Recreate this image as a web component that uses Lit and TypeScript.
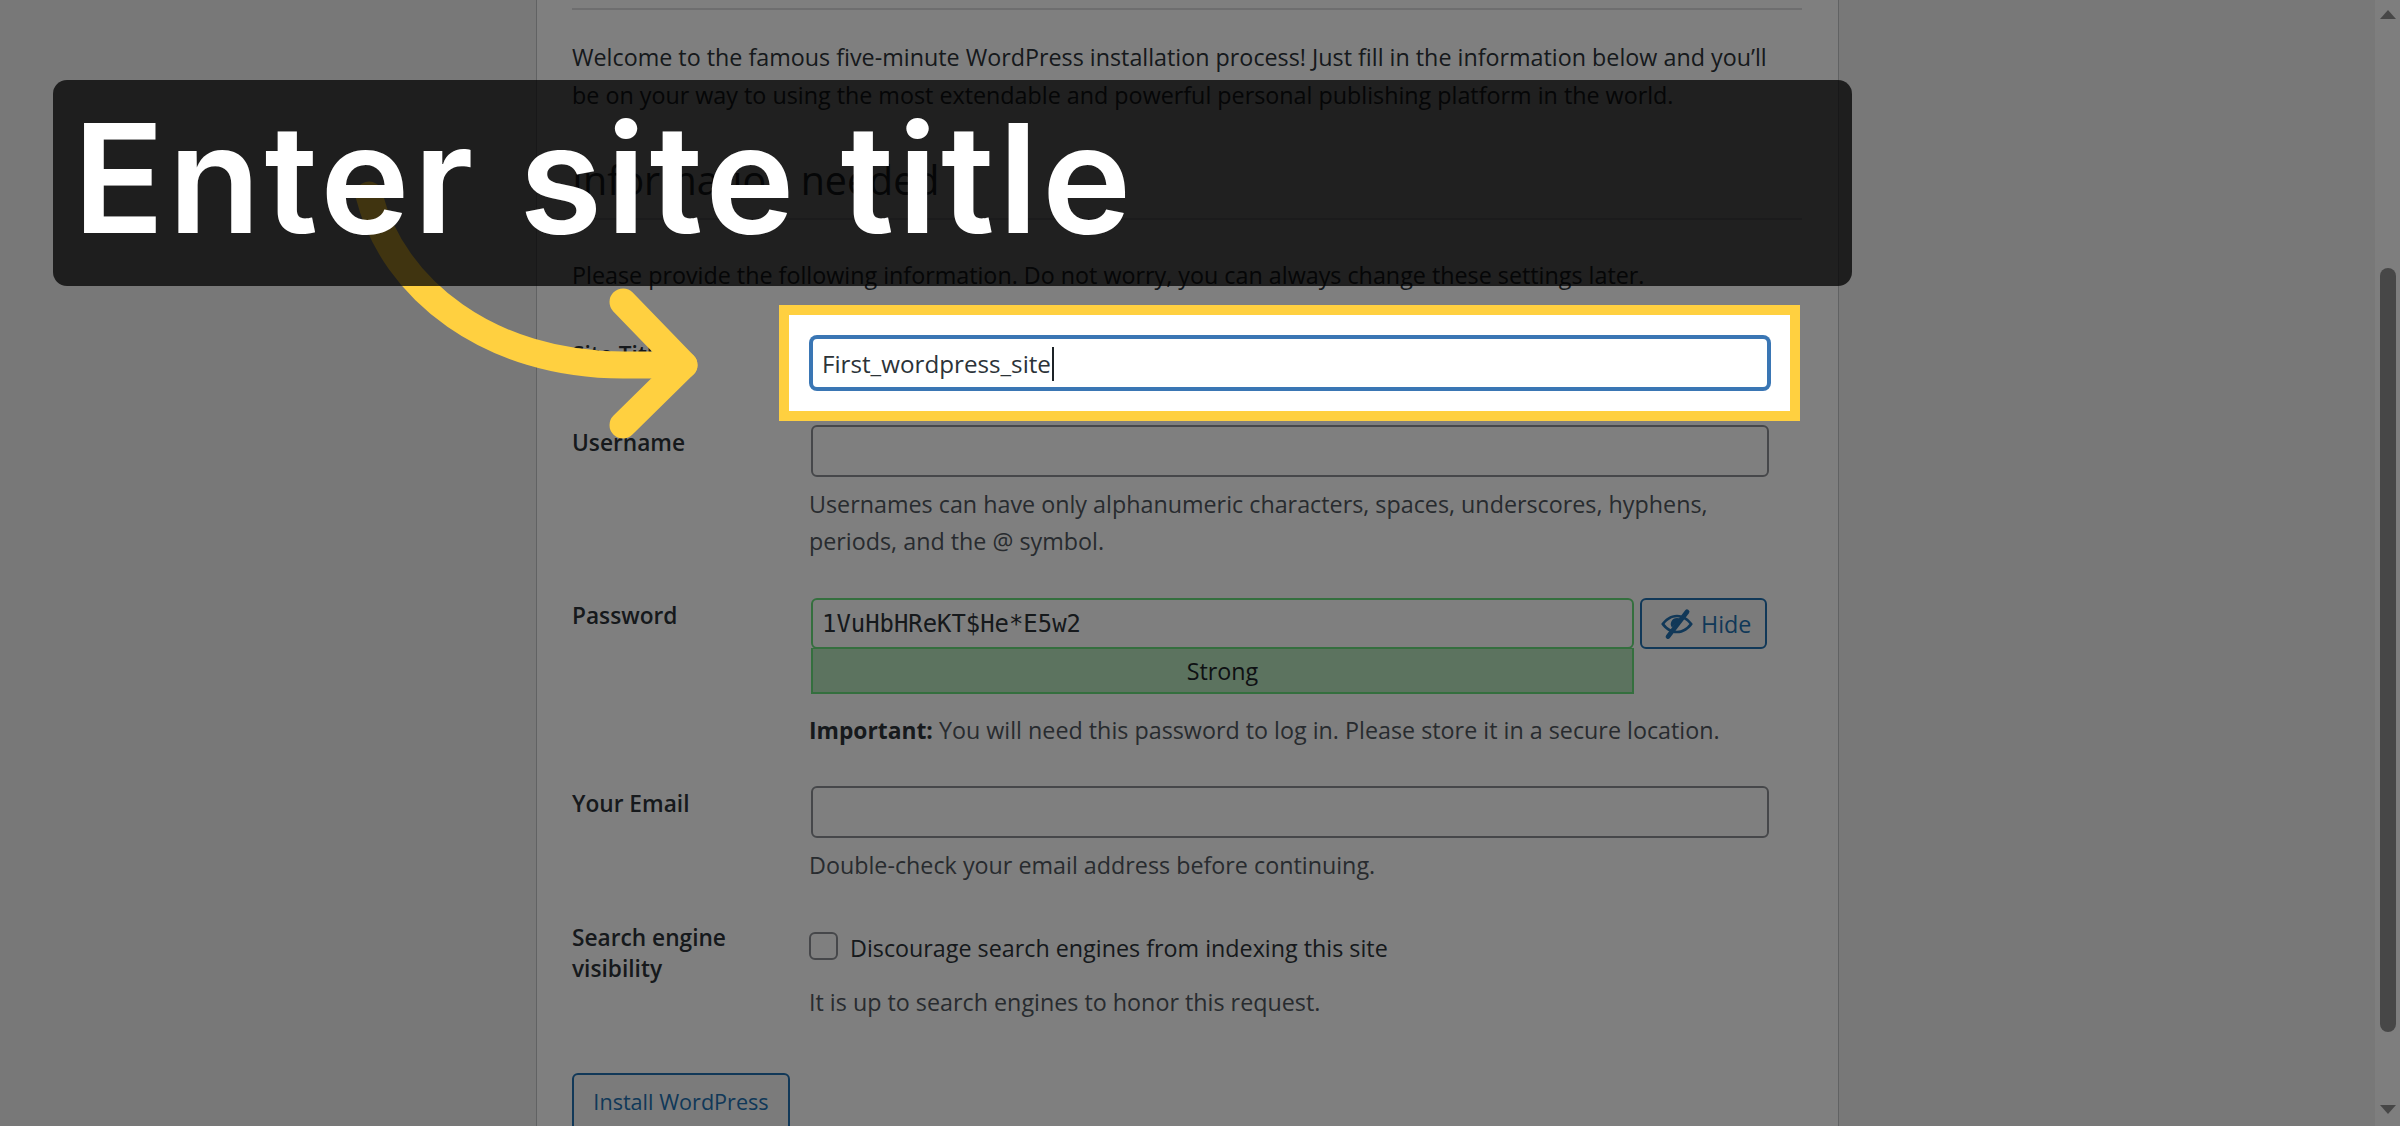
import { LitElement, html, css } from "lit";
import { customElement } from "lit/decorators.js";

@customElement("app-root")
export class AppRoot extends LitElement {
  static styles = css`
    :host {
      display: block;
    }
    .screen {
      position: relative;
      display: flex;
      width: 2400px;
      height: 1126px;
      overflow: hidden;
      background: #f0f0f1;
      font-family: "Open Sans", "Noto Sans", sans-serif;
      font-size: 23.3px;
      line-height: 38px;
      color: #2c3338;
    }
    .main {
      flex: 1;
      display: flex;
      justify-content: center;
    }
    .panel {
      box-sizing: border-box;
      width: 1303px;
      height: 1126px;
      padding: 8px 36px 0 35px;
      background: #fff;
      border: solid #c3c4c7;
      border-width: 0 1px;
    }
    .rule {
      height: 2px;
      background: #dcdcde;
    }
    p {
      margin: 0;
    }
    .intro {
      margin-top: 28px;
    }
    h1 {
      margin: 0;
      padding: 42px 0 14px;
      font-size: 39.4px;
      font-weight: 400;
      line-height: 48px;
      border-bottom: 2px solid #dcdcde;
    }
    .lead {
      margin: 36px 0 43px;
    }
    .row {
      display: grid;
      grid-template-columns: 238px 960px;
      margin-bottom: 36px;
    }
    .row.tall {
      margin-bottom: 38px;
    }
    .label {
      padding-top: 2px;
      font-size: 22.7px;
      font-weight: 600;
      line-height: 31px;
    }
    .field {
      min-width: 0;
    }
    .spot {
      position: relative;
      z-index: 2;
    }
    .spot::before {
      content: "";
      position: absolute;
      inset: -32px -30px -32px -31px;
      z-index: -1;
      background: #fff;
      border: 10px solid #ffd040;
    }
    .input {
      box-sizing: border-box;
      display: block;
      width: calc(100% - 2px);
      height: 52px;
      margin: 0 0 0 1px;
      padding: 0 9px;
      background: #fff;
      border: 2px solid #8c8f94;
      border-radius: 6px;
      font: inherit;
      color: inherit;
      outline: none;
    }
    .focused {
      display: flex;
      align-items: center;
      padding-top: 2px;
      border-color: #3a76b4;
      box-shadow: 0 0 0 2px #3a76b4;
      font-size: 24.2px;
      line-height: 1;
    }
    .caret {
      width: 2px;
      height: 34px;
      margin-left: 1px;
      background: #1d2327;
    }
    .note {
      margin-left: -1px;
      color: #50575e;
    }
    .note.small {
      margin-top: 9px;
      line-height: 37px;
    }
    .note.wide {
      margin-top: 17px;
    }
    .note.wide strong {
      color: #2c3338;
      font-size: 22.8px;
      font-weight: 700;
    }
    .pass-line {
      display: flex;
      gap: 6px;
    }
    .pass-box {
      width: 823px;
      margin-left: 1px;
    }
    .pass {
      width: 100%;
      margin: 0;
      height: 51px;
      border-color: #68de7c;
      font-family: "DejaVu Sans Mono", "Liberation Mono", monospace;
      font-size: 23.9px;
    }
    .strength {
      box-sizing: border-box;
      height: 46px;
      margin-top: -1px;
      background: #b8e6bf;
      border: 2px solid #68de7c;
      border-top-width: 1px;
      text-align: center;
      line-height: 44px;
      color: #1d2327;
    }
    .hide {
      box-sizing: border-box;
      display: flex;
      align-items: center;
      gap: 6px;
      width: 127px;
      height: 51px;
      padding: 0 0 0 17px;
      background: #f6f7f7;
      border: 2px solid #2271b1;
      border-radius: 6px;
      color: #2271b1;
    }
    .hide svg {
      flex: none;
      width: 36px;
      height: 36px;
    }
    .check-line {
      display: flex;
      align-items: center;
      gap: 12px;
      padding-top: 9px;
      margin-left: -1px;
    }
    .check {
      box-sizing: border-box;
      width: 29px;
      height: 28px;
      margin-top: -4px;
      background: #fff;
      border: 2px solid #8c8f94;
      border-radius: 6px;
    }
    .search .note {
      margin-top: 16px;
    }
    .install {
      box-sizing: border-box;
      width: 218px;
      height: 80px;
      margin-top: 52px;
      padding-top: 8px;
      text-align: center;
      background: #f6f7f7;
      border: 2px solid #2271b1;
      border-radius: 6px;
      color: #2271b1;
      font-size: 21.6px;
    }
    .scrollbar {
      flex: none;
      display: flex;
      flex-direction: column;
      align-items: center;
      width: 25px;
      padding-top: 10px;
      background: #fdfdfd;
    }
    .arrow-up,
    .arrow-down {
      width: 0;
      height: 0;
      border-left: 8px solid transparent;
      border-right: 8px solid transparent;
    }
    .arrow-up {
      border-bottom: 9px solid #8e8e8e;
    }
    .arrow-down {
      margin-top: 73px;
      border-top: 9px solid #8e8e8e;
    }
    .thumb {
      width: 16px;
      height: 764px;
      margin-top: 249px;
      background: #8e8e8e;
      border-radius: 8px;
    }
    .shade {
      position: absolute;
      inset: 0;
      z-index: 1;
      background: rgba(0, 0, 0, 0.5);
    }
    .pointer {
      position: absolute;
      left: 0;
      top: 0;
      z-index: 3;
    }
    .banner {
      position: absolute;
      left: 53px;
      top: 80px;
      z-index: 4;
      box-sizing: border-box;
      width: 1799px;
      height: 206px;
      padding: 0 0 0 20px;
      background: rgba(0, 0, 0, 0.75);
      border-radius: 14px;
      color: #fff;
      font-family: Inter, sans-serif;
      font-size: 151px;
      font-weight: 600;
      letter-spacing: 3.9px;
      line-height: 197px;
    }
  `;

  render() {
    return html`
      <div class="screen">
        <div class="main">
          <div class="panel">
            <div class="rule"></div>
            <p class="intro">
              Welcome to the famous five-minute WordPress installation process! Just fill in the information below and you’ll<br />
              be on your way to using the most extendable and powerful personal publishing platform in the world.
            </p>
            <h1>Information needed</h1>
            <p class="lead">Please provide the following information. Do not worry, you can always change these settings later.</p>

            <div class="row">
              <div class="label">Site Title</div>
              <div class="field spot">
                <div class="input focused">First_wordpress_site<span class="caret"></span></div>
              </div>
            </div>

            <div class="row tall">
              <div class="label">Username</div>
              <div class="field">
                <input class="input" />
                <p class="note small">
                  Usernames can have only alphanumeric characters, spaces, underscores, hyphens,<br />
                  periods, and the @ symbol.
                </p>
              </div>
            </div>

            <div class="row">
              <div class="label">Password</div>
              <div class="field">
                <div class="pass-line">
                  <div class="pass-box">
                    <input class="input pass" .value=${"1VuHbHReKT$He*E5w2"} />
                    <div class="strength">Strong</div>
                  </div>
                  <div class="hide">
                    <svg viewBox="0 0 20 20">
                      <path
                        fill="currentColor"
                        d="M10 4.800c3.700 0 6.800 2.300 8.800 5.200-2 2.900-5.100 5.200-8.800 5.200S3.200 12.900 1.200 10c2-2.900 5.100-5.200 8.800-5.200zm0 1.500c-2.800 0-5.200 1.600-6.900 3.700 1.700 2.100 4.100 3.700 6.900 3.700s5.200-1.600 6.900-3.700C15.200 7.900 12.800 6.300 10 6.300z"
                      />
                      <path fill="currentColor" d="M10 6.600a3.400 3.400 0 0 0-2.800 5.400l4.700-4.800a3.400 3.400 0 0 0-1.900-.6z" />
                      <path stroke="currentColor" stroke-width="2.600" stroke-linecap="round" d="M15.600 3.200 5 17" />
                    </svg>
                    Hide
                  </div>
                </div>
                <p class="note wide"><strong>Important:</strong> You will need this password to log in. Please store it in a secure location.</p>
              </div>
            </div>

            <div class="row">
              <div class="label">Your Email</div>
              <div class="field">
                <input class="input" />
                <p class="note small">Double-check your email address before continuing.</p>
              </div>
            </div>

            <div class="row search">
              <div class="label">Search engine visibility</div>
              <div class="field">
                <div class="check-line">
                  <span class="check"></span>
                  <span class="note-text">Discourage search engines from indexing this site</span>
                </div>
                <p class="note">It is up to search engines to honor this request.</p>
              </div>
            </div>

            <div class="install">Install WordPress</div>
          </div>
        </div>

        <div class="scrollbar">
          <div class="arrow-up"></div>
          <div class="thumb"></div>
          <div class="arrow-down"></div>
        </div>

        <div class="shade"></div>

        <svg class="pointer" width="2400" height="1126" fill="none" stroke="#ffd040" stroke-width="27" stroke-linecap="round" stroke-linejoin="round">
          <path d="M369 195C393 290 490 365 623 365L684 365" />
          <path d="M623 302 684 365 623 425" />
        </svg>

        <div class="banner">Enter site title</div>
      </div>
    `;
  }
}
